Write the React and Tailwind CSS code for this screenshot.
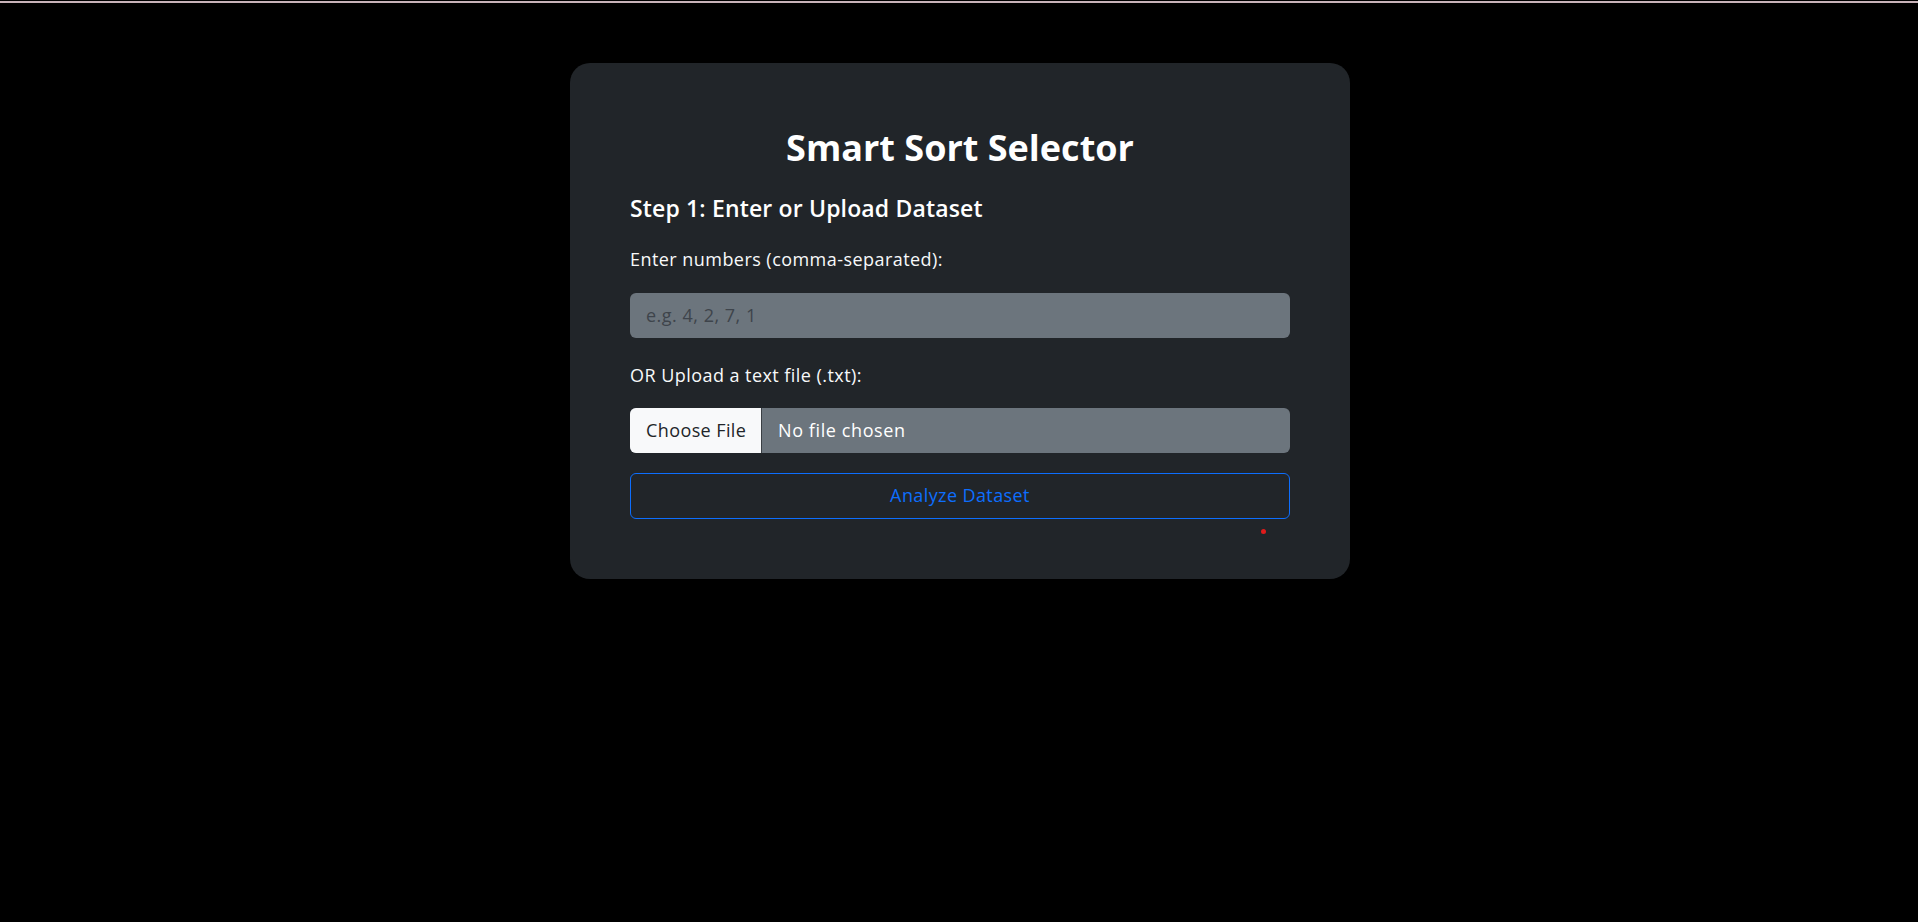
export default function App() {
	return (
		<div className="min-h-screen bg-black font-['Open_Sans',sans-serif]">
			<div className="pt-px">
				<div className="h-[2px] bg-[#c9b3b9]" />
			</div>

			<div className="pt-[60px] pl-[2px]">
				<div className="mx-auto w-[780px] rounded-[20px] bg-[#212529] px-[60px] pt-[63px] pb-[45px]">
					<h2 className="text-center text-[36px] font-bold leading-[1.2] text-white">
						Smart Sort Selector
					</h2>
					<h4 className="mt-[26px] text-[23px] font-semibold leading-[1.2] tracking-[0.15px] text-white">
						Step 1: Enter or Upload Dataset
					</h4>

					<label className="mt-[24px] block text-[18px] leading-6 tracking-[0.45px] text-[#f8f9fa]">
						Enter numbers (comma-separated):
					</label>
					<input
						type="text"
						placeholder="e.g. 4, 2, 7, 1"
						className="mt-[22px] block h-[45px] w-full rounded-md bg-[#6c757d] px-4 text-[18px] tracking-[0.5px] text-white placeholder-[#3e444b] outline-none"
					/>

					<label className="mt-[25px] block text-[18px] leading-6 tracking-[0.45px] text-[#f8f9fa]">
						OR Upload a text file (.txt):
					</label>
					<div className="mt-[21px] flex h-[45px] w-full overflow-hidden rounded-md bg-[#6c757d] text-[18px] tracking-[0.4px]">
						<div className="flex w-[132px] shrink-0 items-center whitespace-nowrap border-r border-[#3a3f44] bg-[#f8f9fa] pl-4 text-[#212529]">
							Choose File
						</div>
						<div className="flex items-center whitespace-nowrap px-4 tracking-[0.6px] text-white">
							No file chosen
						</div>
					</div>

					<button
						type="button"
						className="mt-[20px] block h-[46px] w-full rounded-md border border-[#0d6efd] text-[18px] tracking-[0.4px] text-[#0d6efd]"
					>
						Analyze Dataset
					</button>

					<div className="mt-[10px] flex justify-end pr-[24px]">
						<div className="h-[5px] w-[5px] rounded-full bg-[#e01b1b]" />
					</div>
				</div>
			</div>
		</div>
	);
}
